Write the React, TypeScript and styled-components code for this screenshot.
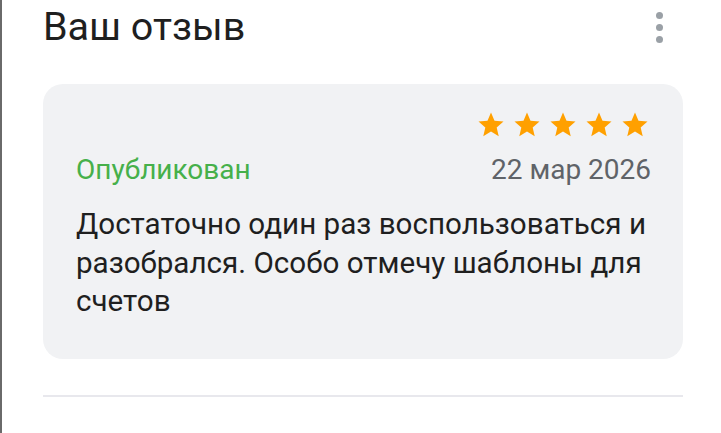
import React from 'react';
import styled, { createGlobalStyle } from 'styled-components';

const GlobalStyle = createGlobalStyle`
  html, body {
    margin: 0;
    padding: 0;
    background: #fff;
  }
  body {
    font-family: Roboto, 'Noto Sans', Arial, sans-serif;
  }
`;

const Page = styled.div`
  box-sizing: border-box;
  width: 721px;
  height: 433px;
  border-left: 2px solid #6a6a6a;
  padding: 0 38px 0 41px;
  overflow: hidden;
`;

const Header = styled.div`
  display: flex;
  justify-content: space-between;
  align-items: flex-start;
  height: 84px;
`;

const Title = styled.h2`
  margin: 4px 0 0;
  font-size: 39.5px;
  line-height: 46px;
  font-weight: 400;
  color: #1f1f1f;
`;

const MoreButton = styled.button`
  display: flex;
  flex-direction: column;
  align-items: center;
  gap: 5px;
  margin: 12px 0 0;
  padding: 0 20px 0 0;
  border: none;
  background: none;
  cursor: pointer;
`;

const Dot = styled.span`
  width: 7px;
  height: 7px;
  border-radius: 50%;
  background: #9aa0a6;
`;

const Card = styled.div`
  box-sizing: border-box;
  height: 275px;
  padding: 26px 32px 0 33px;
  background: #f1f2f4;
  border-radius: 20px;
`;

const Stars = styled.div`
  display: flex;
  justify-content: flex-end;
  gap: 6px;
  margin-right: 1px;
  height: 30px;
`;

const Meta = styled.div`
  display: flex;
  justify-content: space-between;
  align-items: baseline;
  margin-top: 13px;
  line-height: 34px;
`;

const Status = styled.span`
  font-size: 28px;
  color: #46b04a;
`;

const DateText = styled.span`
  font-size: 28px;
  color: #5f6368;
`;

const Body = styled.p`
  margin: 18px 0 0;
  font-size: 29.6px;
  line-height: 38.5px;
  color: #1f1f1f;
`;

const Divider = styled.hr`
  margin: 36px 0 0;
  border: none;
  height: 2px;
  background: #e8e8ed;
`;

const Star = () => (
  <svg width="30" height="30" viewBox="0 0 24 24">
    <path
      fill="#ffa000"
      d="M12 17.27 18.18 21l-1.64-7.03L22 9.24l-7.19-.61L12 2 9.19 8.63 2 9.24l5.46 4.73L5.82 21z"
    />
  </svg>
);

export default function App() {
  return (
    <>
      <GlobalStyle />
      <Page>
        <Header>
          <Title>Ваш отзыв</Title>
          <MoreButton aria-label="Ещё">
            <Dot />
            <Dot />
            <Dot />
          </MoreButton>
        </Header>
        <Card>
          <Stars>
            {[0, 1, 2, 3, 4].map((i) => (
              <Star key={i} />
            ))}
          </Stars>
          <Meta>
            <Status>Опубликован</Status>
            <DateText>22 мар 2026</DateText>
          </Meta>
          <Body>Достаточно один раз воспользоваться и разобрался. Особо отмечу шаблоны для счетов</Body>
        </Card>
        <Divider />
      </Page>
    </>
  );
}
